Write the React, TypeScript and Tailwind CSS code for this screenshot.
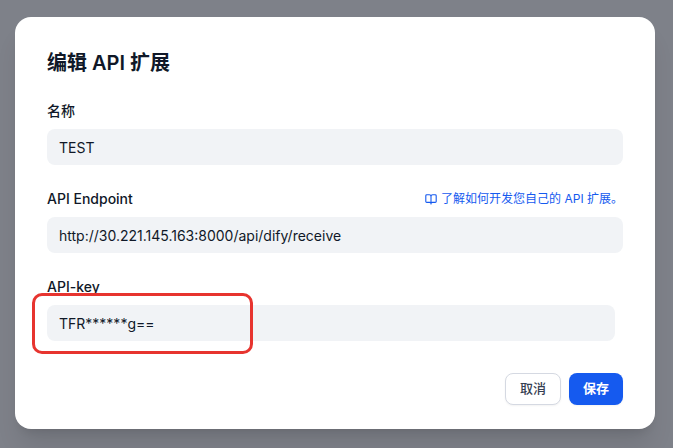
import type { ReactNode } from 'react'

type FieldProps = {
  id: string
  label: string
  value: string
  aside?: ReactNode
  className?: string
}

function BookIcon() {
  return (
    <svg
      className="size-3 shrink-0"
      viewBox="0 0 12 12"
      fill="none"
      stroke="currentColor"
      strokeLinecap="round"
      strokeLinejoin="round"
      strokeWidth="1.1"
      aria-hidden="true"
    >
      <path d="M6 11V3.500C6 2.400 5.400 1.800 4.300 1.800H1.800C1.200 1.800 .8 2.100 .8 2.700V8.500C.8 9.100 1.200 9.400 1.800 9.400H4.500C5.400 9.400 6 9.700 6 10.300C6 9.700 6.600 9.400 7.500 9.400H10.200C10.800 9.400 11.200 9.100 11.200 8.500V2.700C11.200 2.100 10.800 1.800 10.200 1.800H7.700C6.600 1.800 6 2.400 6 3.500" />
    </svg>
  )
}

function Field({ id, label, value, aside, className = '' }: FieldProps) {
  return (
    <div className={className}>
      <div className="mb-2 flex h-5 items-center justify-between">
        <label htmlFor={id} className="text-sm font-medium text-[#101828]">
          {label}
        </label>
        {aside}
      </div>
      <input
        id={id}
        type="text"
        defaultValue={value}
        className="block h-9 w-full rounded-lg bg-[#f1f3f6] px-3 text-sm text-[#101828] outline-none"
      />
    </div>
  )
}

export default function App() {
  return (
    <main className="min-h-screen bg-[#7e8189] pt-[17px] pr-[18px] pb-[19px] pl-[15px] font-['Inter','Noto_Sans_CJK_SC',sans-serif]">
      <form
        role="dialog"
        aria-labelledby="dialog-title"
        onSubmit={(event) => event.preventDefault()}
        className="rounded-2xl bg-white px-8 pt-8 pb-6 shadow-xl"
      >
        <h1 id="dialog-title" className="text-xl/7 font-semibold text-[#101828]">
          编辑 API 扩展
        </h1>
        <div className="mt-6 flex flex-col gap-6">
          <Field id="name" label="名称" value="TEST" />
          <Field
            id="endpoint"
            label="API Endpoint"
            value="http://30.221.145.163:8000/api/dify/receive"
            aside={
              <a href="#docs" className="flex items-center gap-1 text-xs text-[#155aef]">
                <BookIcon />
                了解如何开发您自己的 API 扩展。
              </a>
            }
          />
          <div className="relative">
            <Field id="api-key" label="API-key" value="TFR******g==" className="mr-2" />
            <div className="pointer-events-none absolute -bottom-[13px] -left-[15px] h-[61px] w-[221px] rounded-[10px] border-3 border-[#e7342f]" />
          </div>
        </div>
        <div className="mt-8 flex justify-end gap-2">
          <button
            type="button"
            className="h-8 rounded-lg border border-[#d5d9e2] bg-white px-3.5 text-[13px] font-medium text-[#354052] shadow-xs"
          >
            取消
          </button>
          <button
            type="submit"
            className="h-8 rounded-lg bg-[#155aef] px-3.5 text-[13px] font-semibold text-white shadow-xs"
          >
            保存
          </button>
        </div>
      </form>
    </main>
  )
}
